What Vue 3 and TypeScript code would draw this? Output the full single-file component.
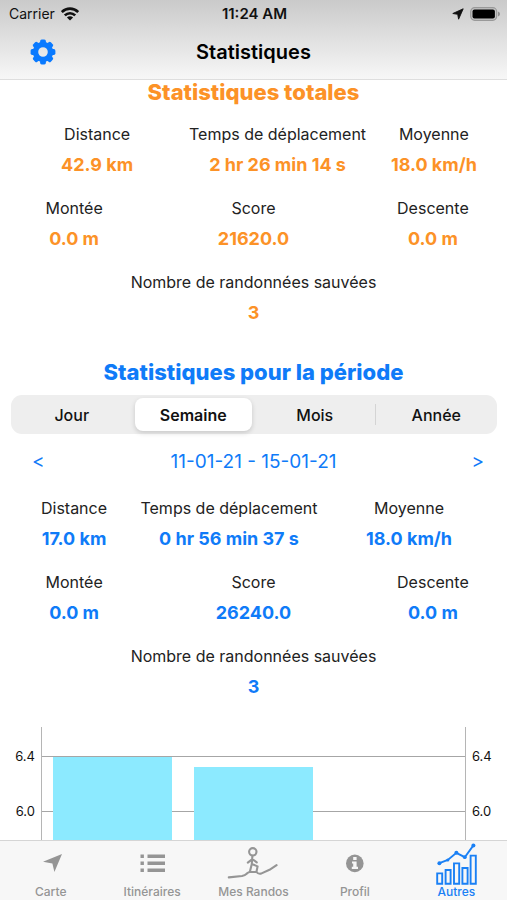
<script setup lang="ts">
import { ref } from 'vue'

interface Stat {
  label: string
  value: string
}

interface StatRow {
  layout: string
  stats: Stat[]
}

const totals: StatRow[] = [
  {
    layout: 'wide-start',
    stats: [
      { label: 'Distance', value: '42.9 km' },
      { label: 'Temps de déplacement', value: '2 hr 26 min 14 s' },
      { label: 'Moyenne', value: '18.0 km/h' },
    ],
  },
  {
    layout: 'wide-middle',
    stats: [
      { label: 'Montée', value: '0.0 m' },
      { label: 'Score', value: '21620.0' },
      { label: 'Descente', value: '0.0 m' },
    ],
  },
  { layout: 'single', stats: [{ label: 'Nombre de randonnées sauvées', value: '3' }] },
]

const period: StatRow[] = [
  {
    layout: 'wide-end',
    stats: [
      { label: 'Distance', value: '17.0 km' },
      { label: 'Temps de déplacement', value: '0 hr 56 min 37 s' },
      { label: 'Moyenne', value: '18.0 km/h' },
    ],
  },
  {
    layout: 'wide-middle',
    stats: [
      { label: 'Montée', value: '0.0 m' },
      { label: 'Score', value: '26240.0' },
      { label: 'Descente', value: '0.0 m' },
    ],
  },
  { layout: 'single', stats: [{ label: 'Nombre de randonnées sauvées', value: '3' }] },
]

const ranges = ['Jour', 'Semaine', 'Mois', 'Année']
const range = ref('Semaine')

const axisMax = 6.61
const pixelsPerUnit = 137.5
const ticks = [6.4, 6.0]
const bars = [6.39, 6.32]
const offset = (v: number) => Math.round((axisMax - v) * pixelsPerUnit) + 'px'

const tabs = ['Carte', 'Itinéraires', 'Mes Randos', 'Profil', 'Autres']
const activeTab = ref('Autres')
</script>

<template>
  <div class="app">
    <header class="top">
      <div class="status">
        <span class="carrier">
          Carrier
          <svg width="18" height="14" viewBox="0 0 18 14" aria-hidden="true">
            <g fill="none" stroke="#111" stroke-width="2.7">
              <path d="M.8 5C5.5 .6 12.5 .6 17.2 5" />
              <path d="M3.8 8.4C6.8 5.5 11.2 5.5 14.2 8.4" />
            </g>
            <path d="M5.9 10.4C7.7 8.8 10.3 8.8 12.1 10.4L9 13.6Z" fill="#111" />
          </svg>
        </span>
        <span class="clock">11:24 AM</span>
        <span class="power">
          <svg width="12" height="12" viewBox="0 0 12 12" aria-hidden="true">
            <path
              d="M11.2 .8L.8 5.5L5.7 6.3L6.6 11.2Z"
              fill="#111"
              stroke="#111"
              stroke-width=".9"
              stroke-linejoin="round"
            />
          </svg>
          <svg width="30" height="14" viewBox="0 0 30 14" aria-hidden="true">
            <rect x=".7" y=".7" width="26" height="12.6" rx="4" fill="#c4c4c4" stroke="#999" stroke-width="1.2" />
            <rect x="2.5" y="2.5" width="22.4" height="9" rx="2" fill="#000" />
            <path d="M28 4.6Q30 5.4 30 7T28 9.4Z" fill="#8f8f8f" />
          </svg>
        </span>
      </div>
      <div class="nav">
        <button class="gear" type="button" aria-label="Réglages">
          <svg width="26" height="26" viewBox="-13 -13 26 26" aria-hidden="true">
            <g fill="#0a7aff">
              <rect
                v-for="n in 8"
                :key="n"
                x="-2.9"
                y="-12.4"
                width="5.8"
                height="6"
                rx="1.6"
                :transform="`rotate(${n * 45})`"
              />
            </g>
            <circle r="7.5" fill="none" stroke="#0a7aff" stroke-width="5.4" />
          </svg>
        </button>
        <h1>Statistiques</h1>
      </div>
    </header>

    <main>
      <section class="total">
        <h2>Statistiques totales</h2>
        <dl v-for="(row, i) in totals" :key="i" class="row" :class="row.layout">
          <div v-for="s in row.stats" :key="s.label" class="stat">
            <dt>{{ s.label }}</dt>
            <dd>{{ s.value }}</dd>
          </div>
        </dl>
      </section>

      <section class="period">
        <h2>Statistiques pour la période</h2>
        <div class="segments" role="group" aria-label="Période">
          <button
            v-for="r in ranges"
            :key="r"
            type="button"
            :class="{ on: r === range }"
            :aria-pressed="r === range"
            @click="range = r"
          >
            {{ r }}
          </button>
        </div>
        <div class="dates">
          <button class="previous" type="button">&lt;</button>
          <span>11-01-21 - 15-01-21</span>
          <button class="next" type="button">&gt;</button>
        </div>
        <dl v-for="(row, i) in period" :key="i" class="row" :class="row.layout">
          <div v-for="s in row.stats" :key="s.label" class="stat">
            <dt>{{ s.label }}</dt>
            <dd>{{ s.value }}</dd>
          </div>
        </dl>
      </section>

      <div class="chart">
        <div class="axis left">
          <span v-for="t in ticks" :key="t" :style="{ top: offset(t) }">{{ t.toFixed(1) }}</span>
        </div>
        <div class="plot">
          <i v-for="t in ticks" :key="t" class="line" :style="{ top: offset(t) }"></i>
          <div v-for="b in bars" :key="b" class="bar" :style="{ marginTop: offset(b) }"></div>
        </div>
        <div class="axis right">
          <span v-for="t in ticks" :key="t" :style="{ top: offset(t) }">{{ t.toFixed(1) }}</span>
        </div>
      </div>
    </main>

    <nav class="tabs">
      <a
        v-for="t in tabs"
        :key="t"
        href="#"
        :class="{ on: t === activeTab }"
        @click.prevent="activeTab = t"
      >
        <svg width="52" height="42" viewBox="0 0 52 42" aria-hidden="true">
          <path v-if="t === 'Carte'" d="M37 11L18 18.8L27.4 20.6L29.4 29Z" fill="currentColor" />
          <path
            v-else-if="t === 'Itinéraires'"
            d="M14.5 11.5h3.4v3.6h-3.4zM21.5 11.5h17.5v3.6h-17.5zM14.5 18.5h3.4v3.6h-3.4zM21.5 18.5h17.5v3.6h-17.5zM14.5 25.5h3.4v3.6h-3.4zM21.5 25.5h17.5v3.6h-17.5z"
            fill="currentColor"
          />
          <g
            v-else-if="t === 'Mes Randos'"
            fill="none"
            stroke="currentColor"
            stroke-width="2.1"
            stroke-linecap="round"
            stroke-linejoin="round"
          >
            <circle cx="25.8" cy="8.8" r="3.7" />
            <path d="M25.4 12.8L24.8 21L22.8 29M20.8 19.6L25.3 16.2L29.8 19.4M24.8 21L30.6 23.4L29.4 29" />
            <path d="M1.8 34.4L15 33Q18 32.3 20 30.4Q21.6 29 23 29H29.4Q31 31.2 34 30.6L42.5 26.8L49.6 22.2" />
          </g>
          <g v-else-if="t === 'Profil'">
            <circle cx="25.8" cy="20.4" r="8.8" fill="currentColor" />
            <path d="M24.2 14h3.4v3h-3.4zM23 18.4h4.6v5.4h1.4v2.2h-6.2v-2.2h1.4v-3.2h-1.2z" fill="#f7f7f7" />
          </g>
          <g v-else fill="none" stroke="currentColor" stroke-width="1.9">
            <path
              d="M7.2 30.4h5V40.8h-5zM15.6 27h5V40.8h-5zM24 20.4h5.2V40.8h-5.2zM32.4 25h5.2V40.8h-5.2zM40.6 12.6h5.2V40.8h-5.2z"
            />
            <path d="M9.4 20.2L17.8 17L26.4 9.8L34.8 14.2L43.4 2.4" />
            <g fill="currentColor" stroke="none">
              <circle cx="9.4" cy="20.2" r="2" />
              <circle cx="17.8" cy="17" r="1.6" />
              <circle cx="26.4" cy="9.8" r="2" />
              <circle cx="34.8" cy="14.2" r="1.9" />
              <circle cx="43.4" cy="2.4" r="2" />
            </g>
          </g>
        </svg>
        <span>{{ t }}</span>
      </a>
    </nav>
  </div>
</template>

<style>
body {
  margin: 0;
  background: #fff;
}
</style>

<style scoped>
.app {
  display: flex;
  flex-direction: column;
  min-height: 100vh;
  font-family: Inter, 'Liberation Sans', sans-serif;
  color: #111;
}
button {
  padding: 0;
  border: 0;
  background: none;
  font: inherit;
  color: inherit;
}
svg {
  display: block;
}
h1,
h2,
dl,
dd {
  margin: 0;
}

.top {
  height: 79px;
  border-bottom: 1px solid #dedede;
  background: linear-gradient(#cacaca, #f7f7f7);
}
.status {
  display: grid;
  grid-template-columns: 1fr auto 1fr;
  align-items: center;
  height: 27px;
  padding: 0 7px 0 9px;
  font-size: 14px;
}
.carrier,
.power {
  display: flex;
  align-items: center;
  gap: 6px;
}
.power {
  justify-content: flex-end;
}
.clock {
  font-size: 15px;
  font-weight: 600;
}
.nav {
  display: grid;
  grid-template-columns: 1fr auto 1fr;
  align-items: center;
  height: 50px;
  padding: 0 30px;
}
.gear {
  justify-self: start;
}
h1 {
  font-size: 20px;
  font-weight: 600;
  line-height: 24px;
  color: #000;
}

main {
  display: flex;
  flex: 1;
  flex-direction: column;
}
.total {
  color: #fc9227;
}
.period {
  padding-top: 32px;
  color: #0f7bf8;
}
h2 {
  padding-bottom: 2px;
  font-size: 22px;
  font-weight: 800;
  line-height: 24px;
  text-align: center;
}
.row {
  display: grid;
  padding: 16px 29px 3px;
}
.wide-start {
  grid-template-columns: 136fr 224fr 88fr;
}
.wide-middle {
  grid-template-columns: 90fr 268fr 90fr;
}
.wide-end {
  grid-template-columns: 108fr 202fr 158fr;
  padding-right: 19px;
  padding-left: 20px;
}
.stat {
  display: flex;
  flex-direction: column;
  align-items: center;
  gap: 7px;
  line-height: 24px;
  white-space: nowrap;
}
dt {
  font-size: 16px;
  color: #222;
}
dd {
  font-size: 18px;
  font-weight: 700;
}

.segments {
  display: grid;
  grid-template-columns: repeat(4, 1fr);
  height: 39px;
  margin: 9px 10px 0 11px;
  border-radius: 11px;
  background: #eee;
  font-size: 16px;
  font-weight: 500;
  color: #111;
}
.segments button {
  position: relative;
  margin: 3px 2px;
  border-radius: 8px;
}
.segments .on {
  background: #fff;
  box-shadow: 0 2px 5px rgba(0, 0, 0, 0.16);
  font-weight: 600;
}
.segments button:not(.on) + button:not(.on)::before {
  content: '';
  position: absolute;
  top: 6px;
  bottom: 6px;
  left: -3px;
  width: 1px;
  background: #d4d4d4;
}
.dates {
  display: grid;
  grid-template-columns: 1fr auto 1fr;
  padding: 16px 23px 6px;
  font-size: 19px;
  line-height: 24px;
}
.previous {
  justify-self: start;
  padding-left: 9px;
}
.next {
  justify-self: end;
}

.chart {
  display: grid;
  flex: 1;
  grid-template-columns: 41px 1fr 41px;
  min-height: 110px;
  padding-top: 25px;
}
.axis {
  position: relative;
  font-size: 13px;
  line-height: 16px;
}
.axis span {
  position: absolute;
  margin-top: -8px;
}
.left span {
  right: 6px;
}
.right span {
  left: 6px;
}
.plot {
  position: relative;
  display: grid;
  grid-template-columns: repeat(3, 1fr);
  border: solid #b5b5b5;
  border-width: 0 1px;
}
.line {
  position: absolute;
  right: 0;
  left: 0;
  height: 1px;
  background: #a6a6a6;
}
.bar {
  position: relative;
  width: 85%;
  justify-self: center;
  background: #8ceaff;
}

.tabs {
  display: grid;
  grid-template-columns: repeat(5, 1fr);
  height: 59px;
  border-top: 1px solid #d5d5d5;
  background: #f7f7f7;
}
.tabs a {
  display: flex;
  flex-direction: column;
  align-items: center;
  padding-top: 2px;
  font-size: 12px;
  font-weight: 500;
  line-height: 14px;
  text-decoration: none;
  white-space: nowrap;
  color: #959595;
}
.tabs .on {
  color: #1a80f5;
}
</style>
